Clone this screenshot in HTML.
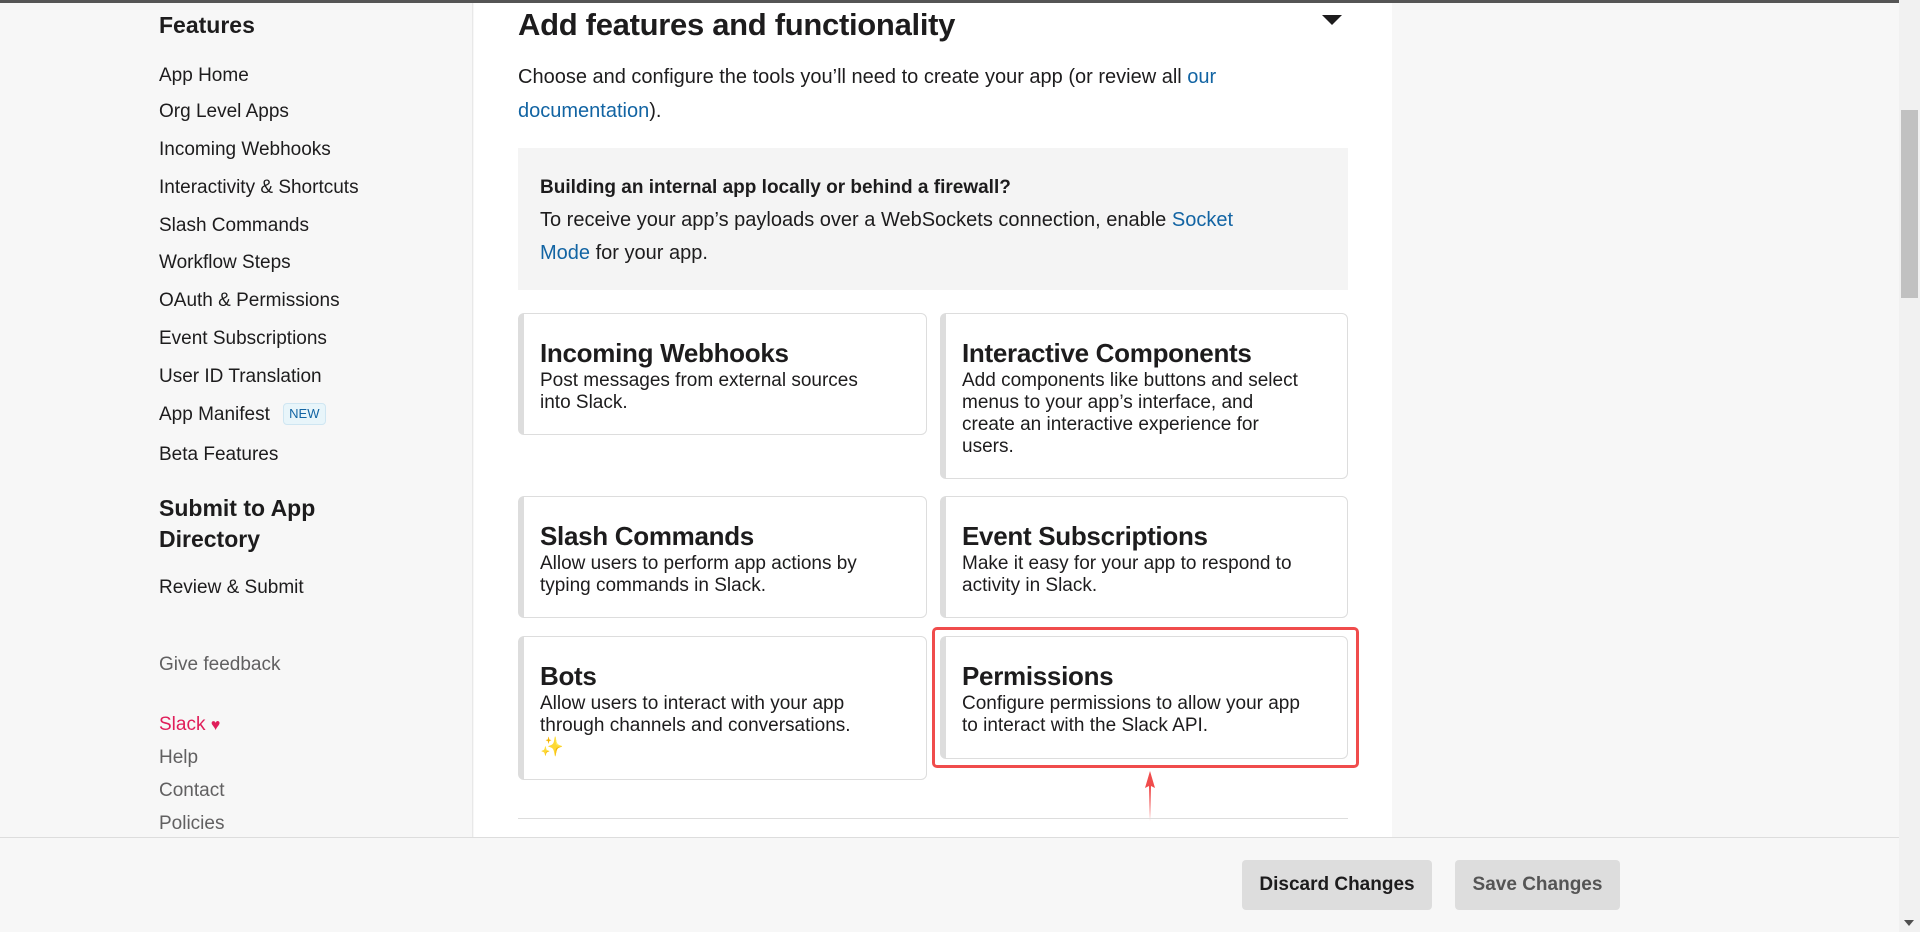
<!DOCTYPE html>
<html><head><meta charset="utf-8"><style>
*{box-sizing:border-box;margin:0;padding:0}
body{width:1920px;height:932px;overflow:hidden;background:#f7f7f7;font-family:"Liberation Sans",sans-serif;color:#1d1c1d;position:relative}
.topbar{position:absolute;left:0;top:0;width:1920px;height:3px;background:#555}
.side{position:absolute;left:0;top:3px;width:473px;height:929px;background:#f7f7f7;border-right:1px solid #e8e8e8}
.s{position:absolute;left:159px;font-size:19px;line-height:24px;white-space:nowrap;color:#1d1c1d}
.sh{font-weight:bold;font-size:23px;line-height:31px}
.main{position:absolute;left:474px;top:3px;width:918px;height:929px;background:#fff}
.a{position:absolute;white-space:nowrap}
a{color:#1264a3;text-decoration:none}
.card{position:absolute;background:#fff;border:1px solid #ddd;border-left:6px solid #ddd;border-radius:6px;padding:23px 0 0 16px}
.card h3{font-size:26px;line-height:32px;font-weight:bold;letter-spacing:-0.3px}
.card p{font-size:19px;line-height:22px;margin-top:1px}
.btn{position:absolute;top:860px;height:50px;background:#ddd;border-radius:4px;font-size:19px;font-weight:bold;line-height:50px;text-align:center}
</style></head><body>
<div class="topbar"></div>
<div class="side"></div>
<div class="s sh" style="top:10px">Features</div>
<div class="s" style="top:64px">App Home</div>
<div class="s" style="top:100px">Org Level Apps</div>
<div class="s" style="top:138px">Incoming Webhooks</div>
<div class="s" style="top:176px">Interactivity &amp; Shortcuts</div>
<div class="s" style="top:214px">Slash Commands</div>
<div class="s" style="top:251px">Workflow Steps</div>
<div class="s" style="top:289px">OAuth &amp; Permissions</div>
<div class="s" style="top:327px">Event Subscriptions</div>
<div class="s" style="top:365px">User ID Translation</div>
<div class="s" style="top:403px">App Manifest <span style="display:inline-block;margin-left:8px;font-size:13px;line-height:20px;padding:0 5px;background:#e8f5fa;color:#1264a3;border:1px solid #cfe6f2;border-radius:4px;vertical-align:2px">NEW</span></div>
<div class="s" style="top:443px">Beta Features</div>
<div class="s sh" style="top:493px">Submit to App<br>Directory</div>
<div class="s" style="top:576px">Review &amp; Submit</div>
<div class="s" style="top:653px;color:#616061">Give feedback</div>
<div class="s" style="top:713px;color:#e01e5a">Slack <span style="font-size:16px">♥</span></div>
<div class="s" style="top:746px;color:#616061">Help</div>
<div class="s" style="top:779px;color:#616061">Contact</div>
<div class="s" style="top:812px;color:#616061">Policies</div>

<div class="main"></div>
<div class="a" style="left:518px;top:5px;font-size:31px;line-height:40px;font-weight:bold;letter-spacing:-0.3px">Add features and functionality</div>
<div class="a" style="left:1322px;top:15px;width:0;height:0;border-left:10px solid transparent;border-right:10px solid transparent;border-top:10px solid #1d1c1d"></div>
<div class="a" style="left:518px;top:60px;font-size:20px;line-height:34px;white-space:normal;width:790px">Choose and configure the tools you’ll need to create your app (or review all <a>our documentation</a>).</div>
<div class="a" style="left:518px;top:148px;width:830px;height:142px;background:#f4f4f4"></div>
<div class="a" style="left:540px;top:176px;font-size:19px;font-weight:bold;line-height:24px">Building an internal app locally or behind a firewall?</div>
<div class="a" style="left:540px;top:204px;width:790px;white-space:nowrap;font-size:20px;line-height:33px">To receive your app’s payloads over a WebSockets connection, enable <a>Socket</a><br><a>Mode</a> for your app.</div>

<div class="card" style="left:518px;top:313px;width:409px;height:122px"><h3>Incoming Webhooks</h3><p>Post messages from external sources<br>into Slack.</p></div>
<div class="card" style="left:940px;top:313px;width:408px;height:166px"><h3>Interactive Components</h3><p>Add components like buttons and select<br>menus to your app’s interface, and<br>create an interactive experience for<br>users.</p></div>
<div class="card" style="left:518px;top:496px;width:409px;height:122px"><h3>Slash Commands</h3><p>Allow users to perform app actions by<br>typing commands in Slack.</p></div>
<div class="card" style="left:940px;top:496px;width:408px;height:122px"><h3>Event Subscriptions</h3><p>Make it easy for your app to respond to<br>activity in Slack.</p></div>
<div class="card" style="left:518px;top:636px;width:409px;height:144px"><h3>Bots</h3><p>Allow users to interact with your app<br>through channels and conversations.<br><span style="color:#e8b400">✨</span></p></div>
<div class="card" style="left:940px;top:636px;width:408px;height:123px"><h3>Permissions</h3><p>Configure permissions to allow your app<br>to interact with the Slack API.</p></div>
<div class="a" style="left:932px;top:627px;width:427px;height:141px;border:3px solid #f04c4c;border-radius:5px"></div>
<svg class="a" style="left:1140px;top:770px" width="20" height="52"><path d="M10 1 L5 18 L9 16 L10 51 L11 16 L15 18 Z" fill="#f04c4c"/></svg>
<div class="a" style="left:518px;top:818px;width:830px;height:1px;background:#ddd"></div>

<div class="a" style="left:0;top:837px;width:1899px;height:95px;background:#f7f7f7;border-top:1px solid #ddd"></div>
<div class="btn" style="left:1242px;width:190px;color:#1d1c1d">Discard Changes</div>
<div class="btn" style="left:1455px;width:165px;color:#555">Save Changes</div>
<div class="a" style="left:1899px;top:0;width:21px;height:932px;background:#f1f1f1"></div>
<div class="a" style="left:1901px;top:110px;width:17px;height:188px;background:#c1c1c1"></div>
<div class="a" style="left:1904px;top:920px;width:0;height:0;border-left:5px solid transparent;border-right:5px solid transparent;border-top:6px solid #505050"></div>
</body></html>
